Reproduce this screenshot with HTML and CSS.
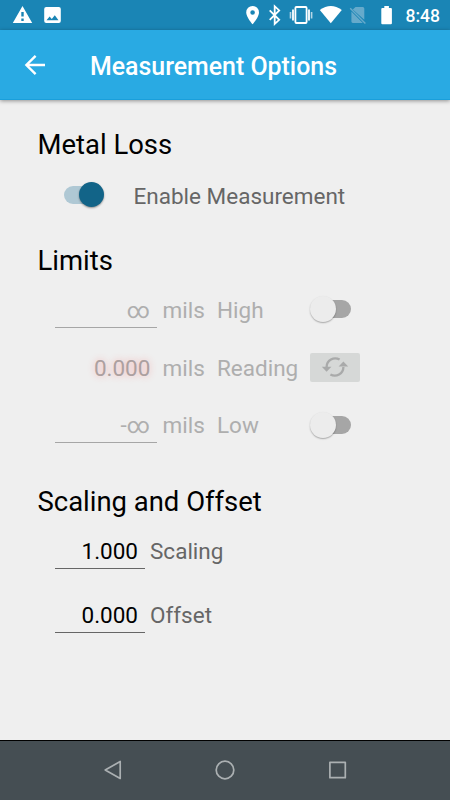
FILE: index.html
```html
<!DOCTYPE html>
<html lang="en">
<head>
<meta charset="utf-8">
<title>Measurement Options</title>
<link rel="stylesheet" href="styles.css">
</head>
<body>
<div class="screen">
  <div class="status">
    <svg class="status-icons" width="400" height="30" viewBox="0 0 400 30">
      <path fill="#fff" fill-rule="evenodd" d="M22.500 6L32.200 23H12.800zM21.300 12v4.600h2.400V12zM21.300 18.600V21h2.400v-2.400z"/>
      <path fill="#fff" fill-rule="evenodd" d="M46.200 7h12.600a2 2 0 0 1 2 2v12a2 2 0 0 1-2 2H46.200a2 2 0 0 1-2-2V9a2 2 0 0 1 2-2zM46.500 20.200h12l-3.700-5-3 3.700-2.200-2.500z"/>
      <path fill="#fff" fill-rule="evenodd" d="M252.600 6a6.400 6.400 0 0 1 6.400 6.400c0 4.600-6.400 11.900-6.400 11.900s-6.400-7.300-6.400-11.900a6.400 6.400 0 0 1 6.400-6.400zM252.600 10.200a2.300 2.300 0 1 0 0 4.600 2.300 2.300 0 0 0 0-4.600z"/>
      <path fill="none" stroke="#fff" stroke-width="1.800" d="M269.700 10.300l9.500 9.500-4.500 4.200V6.200l4.500 4.200-9.500 9.500"/>
      <path fill="none" stroke="#fff" stroke-width="1.800" d="M296.400 7h9.200q1 0 1 1v14q0 1-1 1h-9.200q-1 0-1-1V8q0-1 1-1zM293 9.500v11M309 9.500v11"/>
      <path fill="none" stroke="#b5d6e7" stroke-width="1.600" d="M290.500 12v6.500M311.600 12v6.500"/>
      <path fill="#fff" d="M319.800 10q11-7.800 22 0L330.800 23.300z"/>
      <path fill="#66aacb" d="M355.500 7h7.300a1.500 1.500 0 0 1 1.500 1.500V19.800L352.800 9.400zM351.400 11.500L362.800 23h-10a1.400 1.400 0 0 1-1.400-1.400z"/>
      <path stroke="#66aacb" stroke-width="1.400" d="M350.200 8.200L365.400 23.600"/>
      <path fill="#fff" d="M384.300 6h4.600v1.900h2q1 0 1 1v14.400q0 1-1 1h-8.600q-1 0-1-1V8.900q0-1 1-1h2z"/>
    </svg>
    <span class="clock">8:48</span>
  </div>
  <header class="bar">
    <svg class="back" width="22" height="22" viewBox="0 0 22 22"><path fill="none" stroke="#fff" stroke-width="2.400" d="M21 11H3M11.600 1.800L2.400 11l9.200 9.200"/></svg>
    <h1>Measurement Options</h1>
  </header>
  <main>
    <h2>Metal Loss</h2>
    <div class="enable">
      <span class="switch on"><i></i></span>
      <span>Enable Measurement</span>
    </div>
    <h2 class="limits-title">Limits</h2>
    <div class="limits">
      <div class="row">
        <span class="field">∞</span><span>mils</span><span>High</span><span class="switch"><i></i></span>
      </div>
      <div class="row">
        <span class="field reading">0.000</span><span>mils</span><span>Reading</span>
        <span class="refresh">
          <svg width="28" height="22" viewBox="0 0 28 22">
            <path fill="none" stroke="#a9aaaa" stroke-width="2.300" d="M18.600 3.600A8.600 8.600 0 0 0 5.600 11M9.400 18.400A8.600 8.600 0 0 0 22.400 11"/>
            <path fill="#a9aaaa" d="M.8 10.800h9.600l-4.800 5zM17.600 10.400h9.600l-4.800-5z"/>
          </svg>
        </span>
      </div>
      <div class="row">
        <span class="field">-∞</span><span>mils</span><span>Low</span><span class="switch"><i></i></span>
      </div>
    </div>
    <h2 class="scale-title">Scaling and Offset</h2>
    <div class="scales">
      <div class="pair"><span class="field">1.000</span><span>Scaling</span></div>
      <div class="pair"><span class="field">0.000</span><span>Offset</span></div>
    </div>
  </main>
  <nav>
    <svg width="20" height="20" viewBox="0 0 20 20"><path d="M17.200 1.500v17L2.200 10z"/></svg>
    <svg width="20" height="20" viewBox="0 0 20 20"><circle cx="10" cy="10" r="8.800"/></svg>
    <svg width="20" height="20" viewBox="0 0 20 20"><rect x="1.900" y="2.300" width="15.400" height="15.400"/></svg>
  </nav>
</div>
</body>
</html>
```

FILE: styles.css
```css
* { box-sizing: border-box; }
body {
  margin: 0;
  font-family: Roboto, sans-serif;
  font-size: 22.5px;
  color: #666;
}
.screen {
  width: 450px;
  height: 800px;
  display: flex;
  flex-direction: column;
  background: #efefef;
  overflow: hidden;
}
.status {
  height: 30px;
  display: flex;
  align-items: center;
  background: #1a85b5;
  flex: none;
}
.status-icons { flex: none; }
.clock {
  margin: 1px 0 0 5.5px;
  font-size: 17.5px;
  font-weight: 500;
  line-height: 20px;
  color: #fff;
}
.bar {
  height: 70px;
  flex: none;
  display: flex;
  align-items: center;
  padding-left: 24px;
  background: #29aae3;
  border-bottom: 1px solid #1a9fdb;
  box-shadow: 0 1px 4px rgba(0, 0, 0, .4);
}
.bar h1 {
  margin: 4px 0 0 44px;
  font-size: 24.9px;
  font-weight: 500;
  line-height: 30px;
  color: #fff;
}
main {
  flex: 1;
  padding: 28px 0 0 37.5px;
}
h2 {
  margin: 0;
  height: 33px;
  font-size: 27.45px;
  font-weight: 400;
  line-height: 35px;
  color: #000;
}
.enable {
  height: 32px;
  margin: 19px 0 0 26.5px;
  display: flex;
  align-items: center;
  gap: 28.5px;
}
.limits-title { margin-top: 32px; }
.limits {
  margin: 14px 0 0 17.5px;
  color: #aeaeae;
}
.row {
  height: 38px;
  margin-bottom: 19.7px;
  display: grid;
  grid-template-columns: 107.5px 54.5px 92.5px 51px;
  align-items: center;
}
.field {
  width: 102.4px;
  height: 36px;
  padding-right: 7.5px;
  line-height: 36px;
  text-align: right;
  border-bottom: 1px solid #a6a6a6;
}
.reading {
  padding-right: 7px;
  border-color: transparent;
  color: #aca0a0;
  text-shadow: 0 0 7px rgba(255, 80, 80, .38);
}
.switch {
  width: 41px;
  height: 26px;
  margin: -2px 0 0 .5px;
  display: flex;
  align-items: center;
  position: relative;
}
.row:last-child .switch { margin-top: -1px; }
.switch::before {
  content: "";
  width: 34px;
  height: 18px;
  margin-left: 6.5px;
  border-radius: 9px;
  background: #a6a6a6;
}
.switch i {
  position: absolute;
  left: 0;
  top: 0;
  width: 26px;
  height: 26px;
  border-radius: 50%;
  background: #ececec;
  box-shadow: 0 1px 1.5px rgba(0, 0, 0, .3);
}
.switch.on { margin-left: 0; }
.switch.on::before { margin-left: 0; background: #afc8d4; }
.switch.on i {
  left: 14.5px;
  width: 25px;
  height: 25px;
  background: #126488;
  box-shadow: 0 1px 2px rgba(0, 0, 0, .4);
}
.refresh {
  width: 50px;
  height: 29px;
  margin: -1px 0 0 .3px;
  display: flex;
  align-items: center;
  justify-content: center;
  border-radius: 2px;
  background: #d6d8d7;
}
.scale-title { margin-top: 40.5px; }
.scales { margin: 15px 0 0 17.5px; }
.pair {
  height: 36px;
  margin-bottom: 28px;
  display: flex;
  gap: 5px;
  line-height: 36px;
}
.pair .field {
  width: 90px;
  padding-right: 7px;
  color: #000;
  border-color: #666;
}
nav {
  height: 60px;
  flex: none;
  display: flex;
  align-items: center;
  justify-content: center;
  gap: 92.5px;
  padding-bottom: 1px;
  background: #454e53;
  border-top: 1px solid #000;
}
nav svg {
  fill: none;
  stroke: #abb0b2;
  stroke-width: 1.7;
  stroke-linejoin: round;
}
```
